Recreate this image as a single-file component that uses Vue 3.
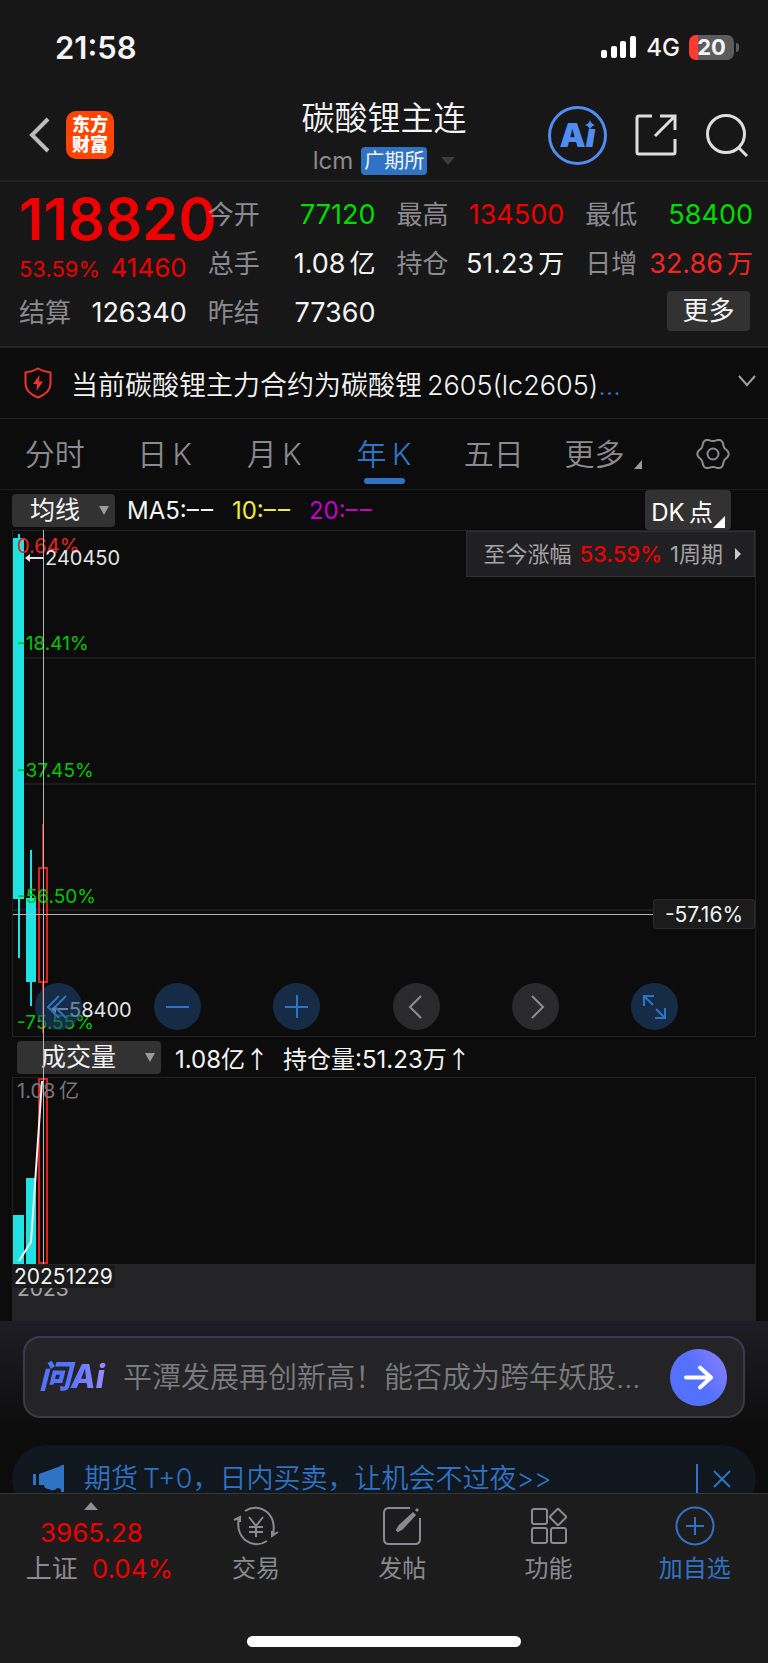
<template>
  <div class="page">
    <!-- 状态栏 -->
    <div class="status-bar">
      <span class="clock">21:58</span>
      <div class="status-right">
        <svg class="signal" width="36" height="24" viewBox="0 0 36 24">
          <rect x="0" y="15" width="6" height="8" rx="2" />
          <rect x="10" y="11" width="6" height="12" rx="2" />
          <rect x="19" y="6" width="6" height="17" rx="2" />
          <rect x="29" y="1" width="6" height="22" rx="2" />
        </svg>
        <span class="network">4G</span>
        <div class="battery"><span>20</span></div>
      </div>
    </div>

    <!-- 标题栏 -->
    <header class="nav">
      <div class="nav-left">
        <button class="icon-btn" aria-label="返回">
          <svg width="22" height="38" viewBox="0 0 22 38">
            <path d="M19 3 L3 19 L19 35" class="back-line" />
          </svg>
        </button>
        <div class="logo"><span>东方</span><span>财富</span></div>
      </div>
      <div class="nav-title">
        <h1>碳酸锂主连</h1>
        <div class="nav-sub">
          <span class="code">lcm</span>
          <span class="exchange">广期所</span>
          <svg width="14" height="8" viewBox="0 0 14 8"><path d="M0 0H14L7 8Z" fill="#3c3c3e" /></svg>
        </div>
      </div>
      <div class="nav-right">
        <button class="icon-btn ai-btn" aria-label="Ai">
          <span class="ai-text">A<i>ı</i></span>
          <svg class="spark" width="10" height="10" viewBox="0 0 10 10">
            <path d="M5 0 Q6 4 10 5 Q6 6 5 10 Q4 6 0 5 Q4 4 5 0Z" fill="#4f8ef0" />
          </svg>
        </button>
        <button class="icon-btn" aria-label="分享">
          <svg width="42" height="42" viewBox="0 0 42 42" class="line-icon">
            <path d="M17 2H4Q2 2 2 4V38Q2 40 4 40H38Q40 40 40 38V25" />
            <path d="M25 2H40V16M39 3L20 22" />
          </svg>
        </button>
        <button class="icon-btn" aria-label="搜索">
          <svg width="44" height="44" viewBox="0 0 44 44" class="line-icon">
            <circle cx="21" cy="21" r="18.5" />
            <path d="M34 35L42 43" />
          </svg>
        </button>
      </div>
    </header>

    <!-- 行情 -->
    <section class="quote">
      <div class="latest">
        <div class="price">118820</div>
        <div class="change"><span class="percent">53.59%</span><span>41460</span></div>
      </div>
      <div v-for="item in quotes" :key="item.label" class="cell">
        <span class="label">{{ item.label }}</span>
        <span :class="item.tone">{{ item.value }}<i v-if="item.unit">{{ item.unit }}</i></span>
      </div>
      <button class="more-btn">更多</button>
    </section>

    <!-- 公告 -->
    <section class="notice">
      <svg width="28" height="32" viewBox="0 0 28 32">
        <path d="M14 1.5Q20 5 26.500 5.500V17Q26 26 14 30.500Q2 26 1.500 17V5.500Q8 5 14 1.500Z" fill="none" stroke="#f2302e" stroke-width="2" />
        <path d="M15.500 8L9 17H13L12.500 24L19 14.500H15Z" fill="#f2302e" />
      </svg>
      <p>当前碳酸锂主力合约为碳酸锂&thinsp;2605(lc2605)<span>...</span></p>
      <button class="icon-btn expand" aria-label="展开">
        <svg width="20" height="12" viewBox="0 0 20 12"><path d="M2 1L10 10L18 1" fill="none" stroke="#a0a0a2" stroke-width="2" /></svg>
      </button>
    </section>

    <!-- 周期切换 -->
    <nav class="tabs">
      <button
        v-for="tab in tabs"
        :key="tab"
        class="tab"
        :class="{ active: tab === activeTab }"
        @click="activeTab = tab"
      >{{ tab }}</button>
      <button class="tab tab-more">
        更多
        <svg width="8" height="9" viewBox="0 0 8 9"><path d="M8 0V9H0Z" fill="#9a9a9e" /></svg>
      </button>
      <button class="icon-btn" aria-label="设置">
        <svg width="34" height="34" viewBox="-17 -17 34 34" fill="none" stroke="#8a8a90" stroke-width="2">
          <path :d="gearPath" />
          <circle r="5.500" />
        </svg>
      </button>
    </nav>

    <section class="charts">
      <div class="indicator-row">
        <label class="picker">
          <select v-model="mainIndicator" aria-label="主图指标">
            <option>均线</option>
          </select>
          <svg width="10" height="9" viewBox="0 0 10 9"><path d="M0 0H10L5 9Z" fill="#9a9a9e" /></svg>
        </label>
        <span class="ma5">MA5:–&hairsp;–</span>
        <span class="ma10">10:–&hairsp;–</span>
        <span class="ma20">20:–&hairsp;–</span>
        <button class="dk-btn">
          DK&thinsp;点
          <svg width="12" height="12" viewBox="0 0 12 12"><path d="M12 0V12H0Z" fill="#fff" /></svg>
        </button>
      </div>

      <div class="kline">
        <svg class="plot" width="100%" height="100%">
          <line v-for="y in [127, 253, 379]" :key="y" x1="0" x2="100%" :y1="y" :y2="y" class="grid-line" />
          <g class="down">
            <rect x="0" y="7" width="11" height="361" />
            <rect x="5" y="3" width="2" height="424" />
            <rect x="13" y="367" width="10" height="84" />
            <rect x="17" y="319" width="2" height="156" />
          </g>
          <g class="up">
            <rect x="26" y="337" width="8" height="114" fill="none" stroke-width="2" />
            <path d="M30 293V336M30 452V502" stroke-width="2" />
          </g>
          <line x1="0" x2="100%" y1="383.5" y2="383.5" class="cross" />
          <g class="axis">
            <text x="4" y="22" class="rise">0.64%</text>
            <text v-for="t in axis" :key="t.text" x="4" :y="t.y">{{ t.text }}</text>
          </g>
          <g class="mark">
            <path d="M12 27L17 23V26H30V28H17V31Z" />
            <text x="32" y="34">240450</text>
            <path d="M38 478L43 474V477H55V479H43V482Z" />
            <text x="56" y="486">58400</text>
          </g>
        </svg>
        <div class="range-tip">
          <span>至今涨幅</span>
          <b>53.59%</b>
          <span>1周期</span>
          <svg width="6" height="12" viewBox="0 0 6 12"><path d="M0 0L6 6L0 12Z" fill="#c8c8ca" /></svg>
        </div>
        <div class="cross-tip">-57.16%</div>
        <div class="tools">
          <button v-for="tool in tools" :key="tool.name" class="tool" :class="{ grey: tool.grey }" :aria-label="tool.name">
            <svg width="47" height="47" viewBox="0 0 47 47"><path :d="tool.d" /></svg>
          </button>
        </div>
      </div>

      <div class="indicator-row volume-row">
        <label class="picker wide">
          <select v-model="subIndicator" aria-label="副图指标">
            <option>成交量</option>
          </select>
          <svg width="10" height="9" viewBox="0 0 10 9"><path d="M0 0H10L5 9Z" fill="#9a9a9e" /></svg>
        </label>
        <span>1.08亿<em>↑</em></span>
        <span>持仓量:51.23万<em>↑</em></span>
      </div>

      <div class="volume">
        <svg class="plot" width="100%" height="100%">
          <g class="down">
            <rect x="0" y="137" width="11" height="50" />
            <rect x="13" y="100" width="10" height="87" />
          </g>
          <g class="up">
            <rect x="26" y="1" width="8" height="184" fill="none" stroke-width="2" />
          </g>
          <text x="4" y="20" class="vol-max">1.08&thinsp;亿</text>
          <path d="M6 183L18 164L22 106L29 3" fill="none" stroke="#f4f4f4" stroke-width="2" />
        </svg>
      </div>
      <div class="date-axis">
        <span class="date-tip">20251229</span>
        <span class="year">2023</span>
      </div>
      <div class="cross-v"></div>
    </section>

    <!-- 问Ai -->
    <section class="ask">
      <div class="ask-box">
        <span class="ask-logo">问Ai</span>
        <input type="text" aria-label="问Ai" placeholder="平潭发展再创新高！能否成为跨年妖股..." />
        <button class="send" aria-label="发送">
          <svg width="57" height="57" viewBox="0 0 57 57">
            <path d="M16 28.500H41M30 18.500L41 28.500L30 38.500" />
          </svg>
        </button>
      </div>
    </section>

    <section class="promo">
      <div class="promo-inner">
        <svg width="32" height="28" viewBox="0 0 32 28" fill="#2f73c4">
          <path d="M0 9H3V20H0ZM6 9L28 1V0H31V27H28V24L24 23Q22 26 18 25L12 23L11 20H6Z" />
        </svg>
        <a href="#">期货&thinsp;T+0，日内买卖，让机会不过夜&gt;&gt;</a>
        <button class="icon-btn close" aria-label="关闭">
          <svg width="18" height="18" viewBox="0 0 18 18"><path d="M1 1L17 17M17 1L1 17" fill="none" stroke="#2f73c4" stroke-width="2" /></svg>
        </button>
      </div>
    </section>

    <!-- 底部栏 -->
    <footer class="bottom">
      <div class="bottom-items">
        <button class="index">
          <svg width="14" height="8" viewBox="0 0 14 8"><path d="M0 8H14L7 0Z" fill="#8e8e93" /></svg>
          <span class="index-value">3965.28</span>
          <span class="index-row"><span class="index-name">上证</span>0.04%</span>
        </button>
        <button class="action">
          <svg width="46" height="40" viewBox="0 0 46 40">
            <path d="M12 5Q23 -2 34 6Q43 14 40 29M45 26L39 30L39 25M34 35Q23 42 12 34Q3 26 6 11M1 14L7 11L7 16" />
            <path d="M16 11L23 20L30 11M16 21H30M16 26H30M23 20V31" />
          </svg>
          交易
        </button>
        <button class="action">
          <svg width="40" height="40" viewBox="0 0 40 40">
            <path d="M28 2H7Q2 2 2 7V33Q2 38 7 38H33Q38 38 38 33V12" />
            <path d="M15 25L18 20L31 8L32 9L20 22Z M34 5L36 3" stroke-width="3" />
          </svg>
          发帖
        </button>
        <button class="action">
          <svg width="38" height="40" viewBox="0 0 38 40">
            <rect x="2" y="3" width="15" height="15" rx="2" />
            <rect x="2" y="22" width="15" height="15" rx="2" />
            <rect x="21" y="22" width="15" height="15" rx="2" />
            <rect x="22" y="5" width="12" height="12" rx="1" transform="rotate(45 28 11)" />
          </svg>
          功能
        </button>
        <button class="action add">
          <svg width="40" height="40" viewBox="0 0 40 40">
            <circle cx="20" cy="20" r="18.500" />
            <path d="M11 20H29M20 11V29" />
          </svg>
          加自选
        </button>
      </div>
      <div class="home-bar"></div>
    </footer>
  </div>
</template>

<script setup>
import { ref } from "vue";

const tabs = ["分时", "日\u2009K", "月\u2009K", "年\u2009K", "五日"];
const activeTab = ref(tabs[3]);
const mainIndicator = ref("均线");
const subIndicator = ref("成交量");

const quotes = [
  { label: "今开", value: "77120", tone: "green" },
  { label: "最高", value: "134500", tone: "red" },
  { label: "最低", value: "58400", tone: "green" },
  { label: "总手", value: "1.08", unit: "亿", tone: "white" },
  { label: "持仓", value: "51.23", unit: "万", tone: "white" },
  { label: "日增", value: "32.86", unit: "万", tone: "bright" },
  { label: "结算", value: "126340", tone: "white" },
  { label: "昨结", value: "77360", tone: "white" },
];

const axis = [
  { text: "-18.41%", y: 119 },
  { text: "-37.45%", y: 246 },
  { text: "-56.50%", y: 372 },
  { text: "-75.55%", y: 498 },
];

const tools = [
  { name: "最早", d: "M24 13L13 24L24 35M31 13L20 24L31 35" },
  { name: "缩小", d: "M12 24H35" },
  { name: "放大", d: "M12 24H35M24 12V35" },
  { name: "左移", d: "M28 13L17 24L28 35", grey: true },
  { name: "右移", d: "M20 13L31 24L20 35", grey: true },
  { name: "全屏", d: "M13 23V13H23M13 13L22 22M34 25V35H24M34 35L25 26" },
];

// 六瓣齿轮
function makeGear() {
  const points = [];
  for (let i = 0; i < 72; i++) {
    const a = (i / 72) * Math.PI * 2;
    const r = 14.3 + 1.4 * Math.cos(a * 6);
    points.push(`${(r * Math.cos(a)).toFixed(2)} ${(r * Math.sin(a)).toFixed(2)}`);
  }
  return `M${points.join("L")}Z`;
}
const gearPath = makeGear();
</script>

<style>
body {
  margin: 0;
  background: #0c0c0c;
}
</style>

<style scoped>
.page {
  font-family: Inter, "Noto Sans CJK SC", sans-serif;
  color: #f4f4f4;
  background: #0c0c0c;
  overflow: hidden;
}
button,
select,
input {
  font: inherit;
  color: inherit;
  border: 0;
  padding: 0;
  margin: 0;
  background: none;
}
svg {
  display: block;
  flex: none;
}
i,
em {
  font-style: normal;
}
.icon-btn {
  display: flex;
  align-items: center;
  justify-content: center;
}

.status-bar {
  display: flex;
  justify-content: space-between;
  align-items: center;
  height: 94px;
  padding: 0 29px 0 55px;
  background: #171717;
  box-sizing: border-box;
}
.clock {
  font-size: 31px;
  font-weight: 600;
}
.status-right {
  display: flex;
  align-items: center;
  gap: 9px;
}
.signal {
  fill: #fff;
}
.network {
  font-size: 24px;
  font-weight: 500;
}
.battery {
  position: relative;
  width: 45px;
  height: 25px;
  border-radius: 7px;
  background: linear-gradient(90deg, #ff3b30 20%, #5c5c5e 20%);
  font-size: 22px;
  font-weight: 700;
  line-height: 25px;
  text-align: center;
  margin-right: 5px;
}
.battery::after {
  content: "";
  position: absolute;
  right: -5px;
  top: 8px;
  width: 3px;
  height: 9px;
  border-radius: 0 4px 4px 0;
  background: #5c5c5e;
}

.nav {
  display: grid;
  grid-template-columns: minmax(0, 1fr) auto minmax(0, 1fr);
  height: 88px;
  background: #171717;
  border-bottom: 2px solid #232325;
  box-sizing: border-box;
}
.nav-left,
.nav-right {
  display: flex;
  align-items: center;
  padding-bottom: 4px;
}
.nav-left {
  gap: 15px;
  padding-left: 29px;
}
.nav-right {
  justify-content: flex-end;
  gap: 28px;
  padding-right: 19px;
}
.back-line {
  fill: none;
  stroke: #bcbcbe;
  stroke-width: 4;
}
.logo {
  display: flex;
  flex-direction: column;
  justify-content: center;
  align-items: center;
  width: 48px;
  height: 48px;
  border-radius: 10px;
  background: #ff4400;
  color: #fff;
  font-size: 18px;
  font-weight: 900;
  line-height: 20px;
}
.nav-title {
  display: flex;
  flex-direction: column;
  align-items: center;
}
.nav-title h1 {
  margin: 4px 0 0;
  font-size: 33px;
  font-weight: 350;
  line-height: 40px;
}
.nav-sub {
  display: flex;
  align-items: center;
  gap: 8px;
  margin-top: 9px;
}
.nav-sub svg {
  margin-left: 6px;
}
.code {
  font-size: 24px;
  line-height: 28px;
  color: #8a8a90;
}
.exchange {
  padding: 0 3px;
  border-radius: 4px;
  background: #2f73c4;
  font-size: 20px;
  line-height: 28px;
}
.ai-btn {
  position: relative;
  width: 59px;
  height: 59px;
  border: 3px solid #4f8ef0;
  border-radius: 50%;
  box-sizing: border-box;
  color: #4f8ef0;
}
.ai-text {
  font-size: 33px;
  font-weight: 900;
  line-height: 40px;
}
.ai-text i {
  font-style: italic;
}
.spark {
  position: absolute;
  right: 9px;
  top: 11px;
}
.line-icon {
  fill: none;
  stroke: #dededf;
  stroke-width: 3;
}

.quote {
  display: grid;
  grid-template-columns: repeat(4, minmax(0, 1fr));
  grid-auto-rows: 49px;
  column-gap: 21px;
  align-items: center;
  padding: 8px 15px 9px 19px;
  background: #171717;
  border-bottom: 2px solid #232325;
  font-size: 26px;
  line-height: 36px;
}
.latest {
  grid-row: span 2;
  color: #ee0000;
}
.price {
  font-size: 58px;
  font-weight: 600;
  line-height: 58px;
}
.cell,
.change {
  display: flex;
  justify-content: space-between;
  align-items: baseline;
  white-space: nowrap;
}
.change {
  line-height: 40px;
}
.percent {
  font-size: 22px;
}
.cell {
  font-size: 27px;
}
.label {
  color: #8a8a90;
  font-size: 26px;
}
.cell i {
  margin-left: 4px;
  font-size: 26px;
}
.green {
  color: #00dc00;
}
.red {
  color: #ee0000;
}
.bright {
  color: #f52424;
}
.more-btn {
  grid-column: 4;
  justify-self: end;
  width: 83px;
  height: 40px;
  margin: 0 3px 4px 0;
  border-radius: 4px;
  background: #323232;
}

.notice {
  display: flex;
  align-items: center;
  height: 71px;
  padding: 0 11px 0 24px;
  border-bottom: 1px solid #222224;
  box-sizing: border-box;
}
.notice p {
  flex: 1;
  margin: 0 0 0 19px;
  padding-top: 5px;
  font-size: 27px;
  font-weight: 350;
  line-height: 36px;
  white-space: nowrap;
}
.notice p span {
  color: #2f73c4;
}
.expand {
  padding-bottom: 4px;
}

.tabs {
  display: grid;
  grid-template-columns: repeat(7, 1fr);
  align-items: center;
  height: 71px;
  border-bottom: 1px solid #1e1e20;
  box-sizing: border-box;
}
.tab {
  position: relative;
  height: 70px;
  padding-bottom: 4px;
  font-size: 30px;
  font-weight: 350;
  color: #8a8a90;
}
.tab.active {
  color: #2f73c4;
}
.tab.active::after {
  content: "";
  position: absolute;
  left: 50%;
  bottom: 5px;
  width: 41px;
  height: 6px;
  margin-left: -20px;
  border-radius: 3px;
  background: #2f73c4;
}
.tab-more {
  display: flex;
  align-items: center;
  justify-content: center;
  gap: 10px;
}
.tab-more svg {
  margin-top: 24px;
}

.charts {
  position: relative;
  padding: 0 12px;
}
.indicator-row {
  display: flex;
  align-items: center;
  height: 40px;
  font-size: 24px;
  white-space: nowrap;
}
.picker {
  position: relative;
  display: flex;
  align-items: center;
  width: 103px;
  height: 33px;
  border-radius: 4px;
  background: #323232;
}
.picker select {
  appearance: none;
  width: 100%;
  height: 33px;
  padding-left: 18px;
  font-size: 25px;
  line-height: 33px;
}
.picker svg {
  position: absolute;
  right: 6px;
  pointer-events: none;
}
.ma5 {
  margin-left: 12px;
}
.ma10 {
  margin-left: 19px;
  color: #f2ea3c;
}
.ma20 {
  margin-left: 19px;
  color: #c800c8;
}
.dk-btn {
  display: flex;
  align-items: center;
  height: 40px;
  margin-left: auto;
  margin-right: 25px;
  padding: 0 6px;
  border-radius: 4px;
  background: #323232;
  color: #fff;
}
.dk-btn svg {
  margin-top: 24px;
}

.kline {
  position: relative;
  height: 507px;
  border: 1px solid #222224;
  box-sizing: border-box;
}
.plot {
  overflow: visible;
}
.grid-line {
  stroke: #1c1c1e;
  stroke-width: 2;
}
.down {
  fill: #20e2e2;
}
.up {
  stroke: #e01e1e;
}
.cross {
  stroke: #b4b4b4;
  stroke-width: 1;
}
.axis {
  fill: #00c800;
  font-size: 19px;
}
.axis .rise {
  fill: #ee2222;
  font-size: 20px;
}
.mark {
  fill: #e4e4e4;
  font-size: 20px;
}
.vol-max {
  fill: #77777c;
  font-size: 20px;
}
.range-tip {
  position: absolute;
  top: 0;
  right: 0;
  display: flex;
  align-items: center;
  gap: 8px;
  height: 46px;
  padding: 0 13px 0 16px;
  border: 1px solid #303032;
  background: #202022;
  color: #a4a4a8;
  font-size: 22px;
  line-height: 30px;
  box-sizing: border-box;
}
.range-tip b {
  color: #ee0000;
  font-weight: 500;
}
.range-tip svg {
  margin-left: 4px;
}
.cross-tip {
  position: absolute;
  top: 368px;
  right: 0;
  width: 102px;
  height: 30px;
  border: 1px solid #2a2a2c;
  border-radius: 3px;
  background: #1b1b1b;
  font-size: 21px;
  line-height: 30px;
  text-align: center;
  box-sizing: border-box;
}
.tools {
  position: absolute;
  left: 22px;
  right: 77px;
  bottom: 6px;
  display: flex;
  justify-content: space-between;
}
.tool {
  width: 47px;
  height: 47px;
  border-radius: 50%;
  background: rgba(30, 66, 110, 0.6);
}
.tool path {
  fill: none;
  stroke: #2f73c4;
  stroke-width: 2;
}
.tool.grey {
  background: #2a2a2c;
}
.tool.grey path {
  stroke: #8e8e93;
}

.volume-row {
  gap: 14px;
  padding-left: 5px;
}
.volume-row em {
  font-family: "Noto Sans CJK SC", sans-serif;
}
.picker.wide {
  width: 144px;
}
.picker.wide select {
  padding-left: 24px;
}
.volume {
  height: 187px;
  border: 1px solid #222224;
  border-bottom: 0;
  box-sizing: border-box;
}
.date-axis {
  position: relative;
  height: 57px;
  background: #242426;
  font-size: 21px;
}
.date-tip {
  position: absolute;
  left: 0;
  top: 1px;
  z-index: 1;
  padding: 0 2px;
  border-radius: 3px;
  background: #1b1b1b;
  line-height: 23px;
}
.year {
  position: absolute;
  left: 5px;
  top: 13px;
  line-height: 24px;
  color: #a4a4a8;
}
.cross-v {
  position: absolute;
  left: 43px;
  top: 40px;
  bottom: 57px;
  width: 1px;
  background: #b4b4b4;
}

.ask {
  padding: 15px 23px 27px;
  background: linear-gradient(#1e1d25, #0c0c0c 90%);
}
.ask-box {
  display: flex;
  align-items: center;
  height: 82px;
  padding: 0 16px 0 14px;
  border: 2px solid transparent;
  border-radius: 17px;
  background:
    linear-gradient(#242426, #242426) padding-box,
    linear-gradient(#39395f, #3c3a3c) border-box;
  box-sizing: border-box;
}
.ask-logo {
  width: 69px;
  font-size: 32px;
  font-weight: 800;
  font-style: italic;
  line-height: 40px;
  white-space: nowrap;
  background: linear-gradient(90deg, #5372ff 40%, #9f8dff);
  background-clip: text;
  color: transparent;
}
.ask-box input {
  flex: 1;
  min-width: 0;
  margin-left: 15px;
  height: 44px;
  outline: none;
  font-size: 29px;
  font-weight: 350;
}
.ask-box input::placeholder {
  color: #7c7c7e;
  opacity: 1;
}
.send {
  width: 57px;
  height: 57px;
  border-radius: 50%;
  background: linear-gradient(60deg, #5470ff 50%, #8f82ff);
}
.send path {
  fill: none;
  stroke: #fff;
  stroke-width: 4;
  stroke-linecap: round;
  stroke-linejoin: round;
}

.promo {
  height: 48px;
  padding: 0 12px;
  overflow: hidden;
}
.promo-inner {
  display: flex;
  align-items: center;
  height: 68px;
  padding: 0 25px 0 21px;
  border-radius: 34px;
  background: #10171e;
  box-sizing: border-box;
}
.promo-inner a {
  flex: 1;
  margin-left: 19px;
  color: #2f73c4;
  font-size: 27px;
  font-weight: 350;
  line-height: 36px;
  text-decoration: none;
  white-space: nowrap;
}
.close {
  height: 30px;
  padding-left: 15px;
  border-left: 2px solid #2f73c4;
}

.bottom {
  height: 171px;
  border-top: 1px solid #363638;
  background: #1c1c1c;
  box-sizing: border-box;
}
.bottom-items {
  display: grid;
  grid-template-columns: 5fr repeat(4, 4fr);
  height: 142px;
  align-items: start;
}
.index {
  display: flex;
  flex-direction: column;
  align-items: center;
  padding-top: 8px;
  color: #ee0000;
  font-size: 26px;
  line-height: 36px;
}
.index-value {
  margin-top: 5px;
}
.index-row {
  padding-left: 16px;
  white-space: nowrap;
}
.index-name {
  margin-right: 14px;
  color: #8a8a90;
}
.action {
  display: flex;
  flex-direction: column;
  align-items: center;
  gap: 5px;
  padding-top: 12px;
  color: #8a8a90;
  font-size: 24px;
  line-height: 36px;
}
.action svg {
  fill: none;
  stroke: currentColor;
  stroke-width: 2;
}
.action.add {
  color: #2f73c4;
}
.home-bar {
  width: 274px;
  height: 11px;
  margin: 0 auto;
  border-radius: 6px;
  background: #fff;
}
</style>
